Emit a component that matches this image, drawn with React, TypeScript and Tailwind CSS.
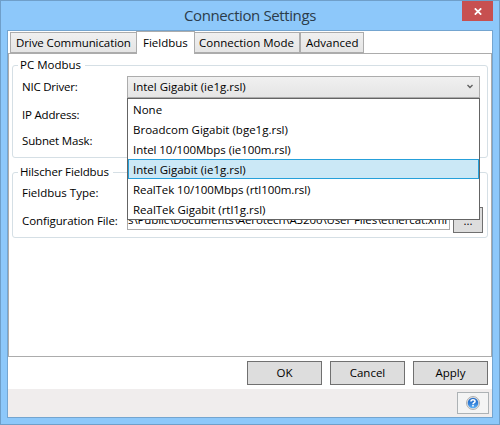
import type { ReactNode } from 'react';

const drivers = [
  { name: 'None', spacing: 'tracking-[0px]' },
  { name: 'Broadcom Gigabit (bge1g.rsl)', spacing: 'tracking-[0px]' },
  { name: 'Intel 10/100Mbps (ie100m.rsl)', spacing: 'tracking-[-0.06px]' },
  { name: 'Intel Gigabit (ie1g.rsl)', spacing: 'tracking-[0px]' },
  { name: 'RealTek 10/100Mbps (rtl100m.rsl)', spacing: 'tracking-[-0.07px]' },
  { name: 'RealTek Gigabit (rtl1g.rsl)', spacing: 'tracking-[-0.02px]' },
];

function GroupBox({ title, className, children }: { title: string; className: string; children: ReactNode }) {
  return (
    <fieldset className={`ml-[3px] w-[476px] rounded-[3px] border border-[#d5dfe5] ${className}`}>
      <legend className="ml-[5px] h-[16px] pr-[4px] pl-[2px] leading-[16px]">{title}</legend>
      {children}
    </fieldset>
  );
}

function DialogButton({ children }: { children: ReactNode }) {
  return (
    <button className="flex h-6 w-[75px] items-center justify-center border border-[#707070] bg-[#dddddd]">
      {children}
    </button>
  );
}

function DriverMenu() {
  return (
    <ul className="absolute top-[21px] -left-px z-10 h-[122px] w-[353px] border border-[#646464] bg-white">
      {drivers.map((d) => (
        <li
          key={d.name}
          className={`h-5 border pl-[4px] leading-[19px] whitespace-nowrap ${d.spacing} ${
            d.name === 'Intel Gigabit (ie1g.rsl)' ? 'border-[#26a0da] bg-[#cbe8f6]' : 'border-transparent'
          }`}
        >
          {d.name}
        </li>
      ))}
    </ul>
  );
}

function HelpIcon() {
  return (
    <svg width="14" height="14" viewBox="0 0 14 14">
      <defs>
        <linearGradient id="ball" x1="0" y1="0" x2="0" y2="1">
          <stop offset="0" stopColor="#2c6fc4" />
          <stop offset="0.5" stopColor="#2f7cd6" />
          <stop offset="1" stopColor="#62b4f6" />
        </linearGradient>
      </defs>
      <circle cx="7" cy="7" r="6.5" fill="#e4e4e4" stroke="#a9a9a9" strokeWidth="0.9" />
      <circle cx="7" cy="7" r="5.3" fill="url(#ball)" />
      <path d="M5 5.6C5 3.2 9 3.3 9 5.4C9 6.8 7 6.6 7 8.2" fill="none" stroke="#fff" strokeWidth="1.6" />
      <rect x="6.2" y="9" width="1.6" height="1.5" fill="#fff" />
    </svg>
  );
}

export default function App() {
  return (
    <div className="flex h-[425px] w-[500px] flex-col border border-[#6f9fc9] bg-[#8dc8fa] font-['Open_Sans',sans-serif] text-[11.5px] text-black">
      <header className="flex h-[29px] pr-[6px]">
        <h1 className="flex-1 pl-[183px] text-[15px] leading-[28px] tracking-[-0.39px] whitespace-nowrap text-[#2b3c4b]">
          Connection Settings
        </h1>
        <button className="flex h-5 w-[31px] items-center justify-center bg-[#c75050]">
          <svg width="8" height="7" viewBox="0 0 8 7">
            <path d="M0.8 0.3L7.2 6.7M7.2 0.3L0.8 6.7" stroke="#fff" strokeWidth="1.7" />
          </svg>
        </button>
      </header>

      <main className="mx-[6px] flex h-[388px] flex-col border border-[#74a5d0] bg-white">
        <nav className="flex h-[22px] items-end pl-[2px] whitespace-nowrap">
          <div className="h-[21px] w-[126px] border border-r-0 border-[#acacac] bg-linear-to-b from-[#f0f0f0] to-[#e5e5e5] pl-[5px] leading-[20px] tracking-[-0.09px]">
            Drive Communication
          </div>
          <div className="z-10 -mb-px h-[23px] w-[59px] border border-b-0 border-[#acacac] bg-white pl-[6px] leading-[21px]">
            Fieldbus
          </div>
          <div className="h-[21px] w-[105px] border border-l-0 border-[#acacac] bg-linear-to-b from-[#f0f0f0] to-[#e5e5e5] pl-[4px] leading-[20px]">
            Connection Mode
          </div>
          <div className="h-[21px] w-[64px] border border-[#acacac] bg-linear-to-b from-[#f0f0f0] to-[#e5e5e5] pl-[5px] leading-[20px]">
            Advanced
          </div>
        </nav>

        <section className="h-[304px] border border-[#acacac] pt-[3px]">
          <GroupBox title="PC Modbus" className="h-[101px]">
            <div className="flex h-[29px] pl-[9px]">
              <label className="w-[105px] leading-[28px] tracking-[-0.22px]">NIC Driver:</label>
              <div className="relative mt-[3px] flex h-[22px] w-[353px] items-center justify-between border border-[#acacac] bg-linear-to-b from-[#f0f0f0] to-[#e5e5e5] pr-[6px] pl-[5px]">
                <span>Intel Gigabit (ie1g.rsl)</span>
                <svg className="-mt-px" width="6" height="5" viewBox="0 0 6 5">
                  <path d="M0.5 1L3 3.5L5.5 1" fill="none" stroke="#606060" strokeWidth="1.4" />
                </svg>
                <DriverMenu />
              </div>
            </div>
            <div className="h-[26px] pl-[9px] leading-[26px] tracking-[-0.2px]">IP Address:</div>
            <div className="h-[26px] pl-[9px] leading-[26px] tracking-[-0.17px]">Subnet Mask:</div>
          </GroupBox>
          <GroupBox title="Hilscher Fieldbus" className="mt-[6px] h-[74px] [&>legend]:tracking-[-0.15px]">
            <div className="h-[26px] pl-[9px] leading-[26px]">Fieldbus Type:</div>
            <div className="flex h-[28px] pl-[9px]">
              <label className="w-[105px] leading-[30px] tracking-[-0.1px]">Configuration File:</label>
              <div className="mt-px flex h-[23px] w-[323px] items-center justify-end overflow-hidden border border-[#acacac] pt-[3px] pr-[2px] tracking-[-0.12px] whitespace-nowrap">
                s\Public\Documents\Aerotech\A3200\User Files\ethercat.xml
              </div>
              <button className="mt-px ml-[3px] h-[26px] w-[30px] border border-[#707070] bg-[#dddddd] leading-[26px]">
                ...
              </button>
            </div>
          </GroupBox>
        </section>

        <div className="flex h-[32px] justify-end gap-2 pt-1 pr-1">
          <DialogButton>OK</DialogButton>
          <DialogButton>Cancel</DialogButton>
          <DialogButton>Apply</DialogButton>
        </div>

        <footer className="flex h-7 justify-end bg-[#f0eded] pt-[3px] pr-[3px]">
          <button className="flex h-[22px] w-8 items-center justify-center border border-[#adb2b5] bg-[#f4f4f4]">
            <HelpIcon />
          </button>
        </footer>
      </main>
    </div>
  );
}
